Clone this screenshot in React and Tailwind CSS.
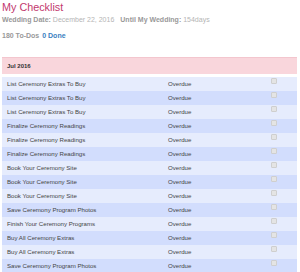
import React from 'react';

const tasks = [
  'List Ceremony Extras To Buy',
  'List Ceremony Extras To Buy',
  'List Ceremony Extras To Buy',
  'Finalize Ceremony Readings',
  'Finalize Ceremony Readings',
  'Finalize Ceremony Readings',
  'Book Your Ceremony Site',
  'Book Your Ceremony Site',
  'Book Your Ceremony Site',
  'Save Ceremony Program Photos',
  'Finish Your Ceremony Programs',
  'Buy All Ceremony Extras',
  'Buy All Ceremony Extras',
  'Save Ceremony Program Photos',
];

const App = () => {
  return (
    <div className="w-[300px] h-[272px] overflow-hidden bg-white font-['Liberation_Sans',Arial,sans-serif]">
      <div className="pl-[2px] pr-[3px]">
        <h1 className="h-[14px] text-[10.8px] leading-[14px] text-[#c2386e]">My Checklist</h1>
        <div className="mt-[1px] h-[10px] text-[7px] leading-[10px] text-[#b5b5b5] whitespace-nowrap">
          <span className="font-bold text-[#999]">Wedding Date:</span> December 22, 2016
          <span className="ml-[6px] font-bold text-[#999]">Until My Wedding:</span> 154days
        </div>
        <div className="mt-[6px] h-[10px] text-[7px] leading-[10px] font-bold whitespace-nowrap">
          <span className="text-[#999]">180 To-Dos</span>
          <span className="ml-[3px] text-[#3a7fc1]">0 Done</span>
        </div>

        <div className="mt-[16px] h-[17px] flex items-center pl-[5px] bg-[#f9d6dc] border-t border-[#f3c6ce] text-[6px] font-bold text-[#333]">
          Jul 2016
        </div>

        <div className="mt-[3px] flex flex-col">
          {tasks.map((t, i) => (
            <div
              key={i}
              className={`h-[14px] grid grid-cols-[166px_103px_1fr] items-start text-[6.1px] leading-[12px] text-[#444] ${
                i % 2 === 0 ? 'bg-[#e6ecfd]' : 'bg-[#d2ddfd]'
              }`}
            >
              <div className="pl-[5px] pt-[1px] whitespace-nowrap">{t}</div>
              <div className="pt-[1px]">Overdue</div>
              <div className="pt-[1px]">
                <div className="w-[6px] h-[6px] rounded-[1px] border border-[#cfcfcf] bg-[#e4e4e4]" />
              </div>
            </div>
          ))}
        </div>
      </div>
    </div>
  );
};

export default App;
